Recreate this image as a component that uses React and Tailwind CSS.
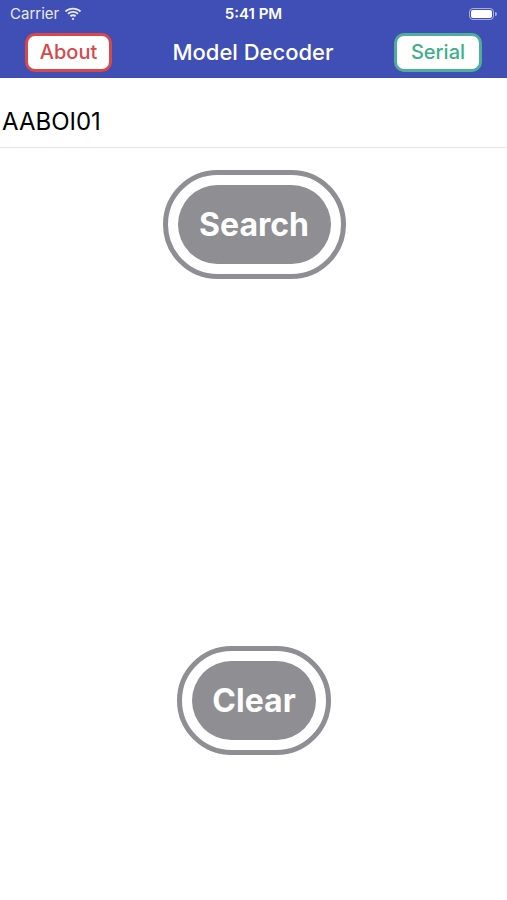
import React, { useState } from "react";

function Wifi() {
  return (
    <svg width="18" height="13" viewBox="0 0 17 12" className="ml-[5px] mb-[2px]">
      <path d="M8.5 2.2c2.5 0 4.8 1 6.5 2.6l1.2-1.3C14.1 1.6 11.4.5 8.5.5S2.9 1.6.8 3.5L2 4.8c1.7-1.6 4-2.6 6.5-2.6z" fill="#e8eaf6" />
      <path d="M8.5 5.4c1.6 0 3 .6 4.1 1.6l1.2-1.3C12.4 4.4 10.5 3.7 8.5 3.7s-3.9.7-5.3 2l1.2 1.3c1.1-1 2.5-1.6 4.1-1.6z" fill="#e8eaf6" />
      <path d="M8.5 8.5c.8 0 1.4.3 1.9.7l1.2-1.3C10.8 7.2 9.7 6.8 8.5 6.8s-2.3.4-3.1 1.1l1.2 1.3c.5-.4 1.1-.7 1.9-.7z" fill="#e8eaf6" />
      <path d="M8.5 9.8l1.3 1.4-1.3 1.3-1.3-1.3z" fill="#e8eaf6" />
    </svg>
  );
}

function Battery() {
  return (
    <div className="flex items-center">
      <div className="w-[25px] h-[12px] rounded-[4px] border border-[#a8aedb] p-[1px]">
        <div className="w-full h-full rounded-[2px] bg-white" />
      </div>
      <div className="w-[2px] h-[4px] rounded-r-sm bg-[#a8aedb] ml-[1px]" />
    </div>
  );
}

function RingButton({ label, width, onClick }) {
  return (
    <button
      onClick={onClick}
      className={`${width} h-[109px] rounded-full border-[5px] border-[#8e8e93] p-[10px] bg-white`}
    >
      <div className="w-full h-full rounded-full bg-[#8e8e93] flex items-center justify-center text-white font-bold text-[32px]">
        {label}
      </div>
    </button>
  );
}

export default function App() {
  const [model, setModel] = useState("AABOI01");

  return (
    <div
      className="w-[507px] h-[900px] bg-white flex flex-col"
      style={{ fontFamily: "Inter, 'Liberation Sans', sans-serif" }}
    >
      {/* header */}
      <div className="bg-[#3f4fb5] h-[78px] flex flex-col">
        <div className="relative h-[28px] flex items-center justify-between pl-[10px] pr-[10px]">
          <div className="flex items-center text-[15px] text-[#e8eaf6]">
            Carrier
            <Wifi />
          </div>
          <div className="absolute left-0 right-0 top-0 h-full flex items-center justify-center text-[15px] font-semibold text-white">
            5:41 PM
          </div>
          <Battery />
        </div>
        <div className="flex-1 flex items-center justify-between px-[25px] pb-[2px]">
          <button className="w-[87px] h-[39px] rounded-[10px] border-[3px] border-[#d9474b] bg-white text-[#d9474b] text-[20px] font-medium flex items-center justify-center">
            About
          </button>
          <div className="text-white text-[22px] font-medium">Model Decoder</div>
          <button className="w-[88px] h-[39px] rounded-[10px] border-[3px] border-[#4fae99] bg-white text-[#3fae8c] text-[20px] font-medium flex items-center justify-center">
            Serial
          </button>
        </div>
      </div>

      {/* input */}
      <div className="h-[70px] border-b border-[#e6e6e6] pt-[30px] pl-[2px]">
        <input
          value={model}
          onChange={(e) => setModel(e.target.value)}
          className="w-full outline-none text-[24px] leading-[28px] text-black bg-transparent"
        />
      </div>

      <div className="flex flex-col items-center">
        <div className="mt-[22px] pl-[1px]">
          <RingButton label="Search" width="w-[183px]" />
        </div>
        <div className="mt-[367px] pl-[1px]">
          <RingButton label="Clear" width="w-[154px]" onClick={() => setModel("")} />
        </div>
      </div>
    </div>
  );
}
